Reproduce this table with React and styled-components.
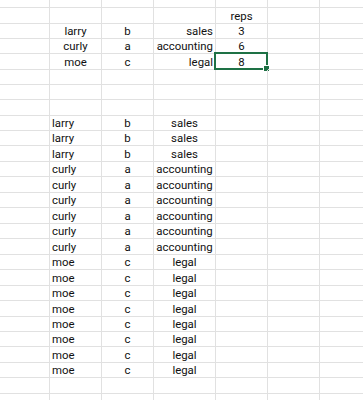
import React from "react";
import styled, { createGlobalStyle } from "styled-components";

const Global = createGlobalStyle`
  html, body { margin: 0; padding: 0; background: #ffffff; }
  body { width: 363px; height: 400px; overflow: hidden; }
`;

const COLS = [50, 52, 52, 62, 52, 52, 60];
const HEIGHTS = [8, 16, 15, 15, 16, 15, 15, 16, 15, 15, 16, 15, 16, 15, 16, 15, 16, 15, 16, 15, 16, 15, 15, 16, 15, 16, 20];

const Sheet = styled.div`
  display: flex;
  flex-direction: column;
  width: 363px;
  height: 400px;
  overflow: hidden;
  font-family: Roboto, "Liberation Sans", sans-serif;
  font-size: 11.4px;
  color: #111111;
`;

const Row = styled.div`
  display: grid;
  grid-template-columns: ${COLS.map((c) => c + "px").join(" ")};
  height: ${(p) => p.$h}px;
  flex: none;
`;

const Cell = styled.div`
  position: relative;
  box-sizing: border-box;
  border-right: 1px solid #e1e1e1;
  border-bottom: 1px solid #e1e1e1;
  display: flex;
  align-items: flex-end;
  justify-content: ${(p) =>
    p.$align === "left" ? "flex-start" : p.$align === "right" ? "flex-end" : "center"};
  padding: 0 ${(p) => (p.$align === "right" ? "2px" : "0")} 0 ${(p) => (p.$align === "left" ? "2px" : "0")};
  line-height: 13px;
  white-space: nowrap;
  overflow: visible;
`;

const Selection = styled.div`
  position: absolute;
  left: -2px;
  top: -2px;
  right: -1px;
  bottom: -1px;
  border: 2px solid #1e7145;
  pointer-events: none;
`;

const Handle = styled.div`
  position: absolute;
  right: -4px;
  bottom: -4px;
  width: 5px;
  height: 5px;
  background: #1e7145;
  border: 1px solid #ffffff;
`;

const upper = [
  { 4: { t: "reps" } },
  { 1: { t: "larry" }, 2: { t: "b" }, 3: { t: "sales", a: "right" }, 4: { t: "3" } },
  { 1: { t: "curly" }, 2: { t: "a" }, 3: { t: "accounting", a: "right" }, 4: { t: "6" } },
  { 1: { t: "moe" }, 2: { t: "c" }, 3: { t: "legal", a: "right" }, 4: { t: "8", sel: true } },
];

const people = [
  ...Array(3).fill(["larry", "b", "sales"]),
  ...Array(6).fill(["curly", "a", "accounting"]),
  ...Array(8).fill(["moe", "c", "legal"]),
];

const rows = [
  {},
  ...upper,
  {},
  {},
  {},
  ...people.map(([n, l, d]) => ({
    1: { t: n, a: "left" },
    2: { t: l },
    3: { t: d },
  })),
  {},
  {},
];

export default function App() {
  return (
    <>
      <Global />
      <Sheet>
        {rows.map((r, ri) => (
          <Row key={ri} $h={HEIGHTS[ri]}>
            {COLS.map((_, ci) => {
              const c = r[ci];
              return (
                <Cell key={ci} $align={c && c.a}>
                  {c && c.t}
                  {c && c.sel && (
                    <Selection>
                      <Handle />
                    </Selection>
                  )}
                </Cell>
              );
            })}
          </Row>
        ))}
      </Sheet>
    </>
  );
}
